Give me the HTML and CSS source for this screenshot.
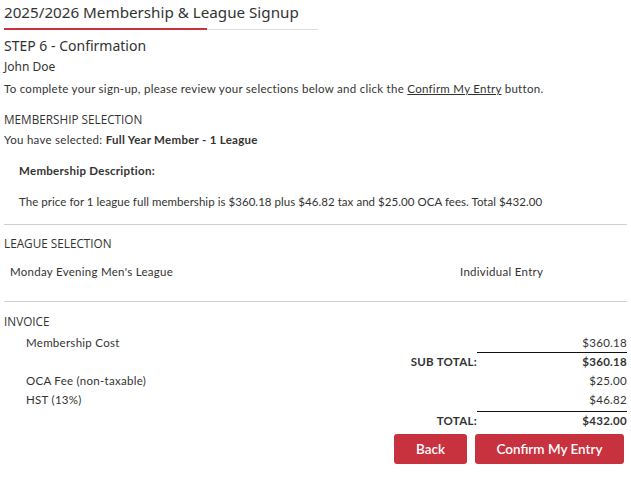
FILE: index.html
```html
<!DOCTYPE html>
<html>
<head>
<meta charset="utf-8">
<link rel="stylesheet" href="styles.css">
</head>
<body>
<div class="page">
  <div class="title-block">
    <h1 class="title">2025/2026 Membership &amp; League Signup</h1>
    <div class="rule"><span class="rule-accent"></span><span class="rule-rest"></span></div>
  </div>
  <h2 class="step">STEP 6 - Confirmation</h2>
  <div class="name">John Doe</div>
  <p class="intro">To complete your sign-up, please review your selections below and click the <span class="link">Confirm My Entry</span> button.</p>

  <h3 class="section-title sec-membership">MEMBERSHIP SELECTION</h3>
  <p class="text selected">You have selected: <b>Full Year Member - 1 League</b></p>
  <p class="text desc-title indent"><b>Membership Description:</b></p>
  <p class="text desc indent">The price for 1 league full membership is $360.18 plus $46.82 tax and $25.00 OCA fees. Total $432.00</p>
  <hr class="divider div1">

  <h3 class="section-title sec-league">LEAGUE SELECTION</h3>
  <div class="league-row">
    <span class="league-name">Monday Evening Men's League</span>
    <span class="league-type">Individual Entry</span>
  </div>
  <hr class="divider div2">

  <h3 class="section-title sec-invoice">INVOICE</h3>
  <div class="invoice">
    <div class="inv-label">Membership Cost</div><div class="inv-amt">$360.18</div>
    <div class="inv-label total-label">SUB TOTAL:</div><div class="inv-amt total-amt">$360.18</div>
    <div class="inv-label">OCA Fee (non-taxable)</div><div class="inv-amt">$25.00</div>
    <div class="inv-label inv-pad">HST (13%)</div><div class="inv-amt inv-pad">$46.82</div>
    <div class="inv-label total-label">TOTAL:</div><div class="inv-amt total-amt">$432.00</div>
  </div>
  <div class="actions">
    <button class="btn btn-back">Back</button>
    <button class="btn btn-confirm">Confirm My Entry</button>
  </div>
</div>
</body>
</html>
```
FILE: styles.css
```css
* { box-sizing: border-box; }
html, body { margin: 0; padding: 0; background: #fff; }
body {
  font-family: "Open Sans", "Liberation Sans", sans-serif;
  color: #333;
}
.page { padding: 0 4px; width: 631px; }
.title-block { width: 314px; }
.title {
  margin: 0;
  font-family: "Noto Sans", sans-serif;
  font-weight: 400;
  font-size: 15.2px;
  line-height: 24px;
  color: #333;
  white-space: nowrap;
}
.rule { display: flex; align-items: flex-end; height: 2px; margin-top: 4px; }
.rule-accent { width: 203px; height: 2px; background: #c8323f; }
.rule-rest { flex: 1; height: 1px; background: #ddd; }
.step {
  margin: 6px 0 0;
  font-family: "Noto Sans", sans-serif;
  font-weight: 400;
  font-size: 14px;
  line-height: 20px;
}
.name {
  margin-top: 2px;
  font-family: "Noto Sans", sans-serif;
  font-size: 12px;
  line-height: 18px;
}
.intro, .text, .league-row, .invoice {
  font-family: "Lato", sans-serif;
  font-size: 11.5px;
  letter-spacing: 0.28px;
  line-height: 18px;
  color: #333;
}
.intro { margin: 4px 0 0; }
.link { text-decoration: underline; }
.section-title {
  margin: 0;
  font-family: "Open Sans", sans-serif;
  font-weight: 400;
  font-size: 11.75px;
  line-height: 18px;
  color: #333;
}
.sec-membership { margin-top: 12px; }
.text { margin: 0; }
.selected { margin-top: 3px; }
.indent { padding-left: 15px; }
.desc-title { margin-top: 13px; }
.desc { margin-top: 13px; letter-spacing: 0.05px; }
.divider { border: 0; border-top: 1px solid #d0d0d0; margin: 0; height: 0; }
.div1 { margin-top: 13px; }
.sec-league { margin-top: 9px; }
.league-row { display: flex; margin-top: 11px; padding-left: 6px; }
.league-name { width: 450px; }
.div2 { margin-top: 20px; }
.sec-invoice { margin-top: 10px; }
.invoice {
  display: grid;
  grid-template-columns: 1fr 150px;
  margin-top: 3px;
}
.inv-label, .inv-amt { line-height: 19px; }
.inv-label { padding-left: 22px; }
.inv-amt { text-align: right; }
.inv-pad { padding-bottom: 2px; }
.total-label { text-align: right; font-weight: 700; line-height: 18px; padding-top: 1px; }
.total-amt { font-weight: 700; border-top: 1px solid #111; line-height: 18px; }
.actions { display: flex; justify-content: flex-end; gap: 8px; margin-top: 4px; padding-right: 3px; }
.btn {
  height: 30px;
  border: 0;
  border-radius: 3px;
  background: #c8323f;
  color: #fff;
  font-family: "Lato", sans-serif;
  font-size: 13.5px;
  font-weight: 600;
  cursor: pointer;
}
.btn-back { width: 73px; }
.btn-confirm { width: 149px; }
```
